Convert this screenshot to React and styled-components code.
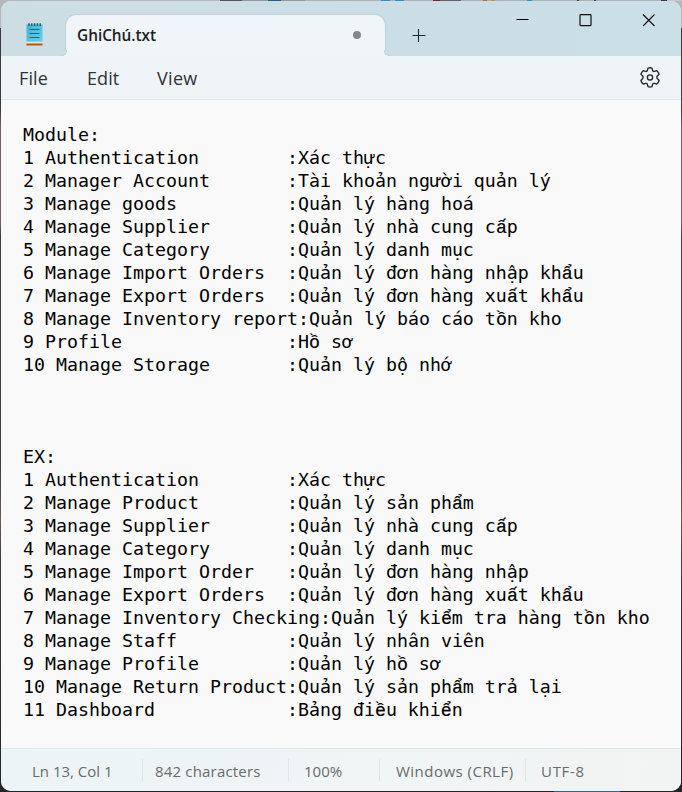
import React from "react";
import styled, { createGlobalStyle } from "styled-components";

const GlobalStyle = createGlobalStyle`
  * { box-sizing: border-box; }
  html, body { margin: 0; padding: 0; overflow: hidden; }
`;

const Desktop = styled.div`
  width: 682px;
  height: 792px;
  padding: 1px;
  overflow: hidden;
  background:
    linear-gradient(90deg, #55565a 0 22px, #96999c 22px 48px, #235f83 48px 61px, #96999c 61px 85px, #aeb1b6 85px 161px, #2a8fc9 161px 170px, #aeb1b6 170px 175px, #2a8fc9 175px 184px, #aeb1b6 184px 213px, #8c1c20 213px 220px, #606166 220px 241px, #aeb1b6 241px 263px, #dc5e3c 263px 267px, #aeb1b6 267px 271px, #d58a3c 271px 275px, #aeb1b6 275px 307px, #1c9bc9 307px 312px, #aeb1b6 312px 357px, #3c3d42 357px 359px, #aeb1b6 359px 374px, #3c3d42 374px 376px, #aeb1b6 376px 441px, #3c3d42 441px 447px, #c5c7ca 447px) 220px 0 / 462px 1px no-repeat,
    linear-gradient(#b4b7ba, #b4b7ba) 0 0 / 682px 28px no-repeat,
    linear-gradient(90deg, #2f659b, #2f659b) 554px 791px / 66px 1px no-repeat,
    linear-gradient(#3b3b3d 0 110px, #705d66 125px 225px, #3d3d41 235px 460px, #6b5a58 520px, #3b3b40 560px, #242427);
`;

const Window = styled.main`
  display: flex;
  flex-direction: column;
  width: 680px;
  height: 790px;
  overflow: hidden;
  border-radius: 10px;
  background: #f9f9f9;
  font-family: "Open Sans", "Noto Sans", sans-serif;
`;

const TitleBar = styled.header`
  display: flex;
  height: 55px;
  flex: none;
  padding-top: 13px;
  background: linear-gradient(90deg, #cddde4, #cbdfe6);
`;

const AppIcon = styled.div`
  width: 64px;
  padding: 9px 0 0 25px;
  svg { display: block; }
`;

const Tab = styled.div`
  position: relative;
  display: flex;
  align-items: flex-start;
  justify-content: space-between;
  width: 321px;
  height: 42px;
  padding: 9px 24px 0 11px;
  border: 1px solid #bfd2d8;
  border-bottom: 0;
  border-radius: 11px 11px 0 0;
  background: #eff5f8;
  &::before, &::after {
    content: "";
    position: absolute;
    bottom: 0;
    width: 5px;
    height: 5px;
    border-bottom: 1px solid #bfd2d8;
    background: #ccdee5;
  }
  &::before {
    left: -5px;
    border-right: 1px solid #bfd2d8;
    border-bottom-right-radius: 5px;
    box-shadow: 2px 2px 0 1px #eff5f8;
    clip-path: inset(0 -1px 0 0);
  }
  &::after {
    right: -5px;
    border-left: 1px solid #bfd2d8;
    border-bottom-left-radius: 5px;
    box-shadow: -2px 2px 0 1px #eff5f8;
    clip-path: inset(0 0 0 -1px);
  }
`;

const TabName = styled.span`
  font-size: 15.4px;
  font-weight: 600;
  line-height: 24px;
  letter-spacing: -0.03px;
  color: #1c2022;
`;

const UnsavedDot = styled.span`
  width: 8px;
  height: 8px;
  margin-top: 7px;
  border-radius: 50%;
  background: #85888a;
`;

const NewTab = styled.div`
  display: flex;
  width: 60px;
  padding: 14px 0 0 26px;
  margin-right: 43px;
  svg { flex: none; }
`;

const Caption = styled.div`
  display: flex;
  gap: 50px;
  margin-left: 26.5px;
  svg { display: block; flex: none; }
`;

const MenuBar = styled.nav`
  display: flex;
  align-items: flex-start;
  flex: none;
  height: 44px;
  padding: 9px 21px 0 18px;
  background: #eff4f8;
  border-bottom: 1px solid #dbe5ea;
`;

const MenuItem = styled.span`
  width: ${(p) => p.$width}px;
  color: #303335;
  font-size: 18px;
  line-height: 27px;
  letter-spacing: ${(p) => p.$tracking || 0}px;
  white-space: nowrap;
`;

const Settings = styled.div`
  margin: 2px 0 0 auto;
  svg { display: block; }
`;

const Editor = styled.div`
  flex: 1;
  padding: 23px 0 0 22px;
  color: #000;
  font-family: "DejaVu Sans Mono", "Liberation Mono", monospace;
  font-size: 18.27px;
  line-height: 23px;
`;

const Line = styled.div`
  height: 23px;
  white-space: pre;
`;

/* Vowels with two stacked marks, kept inside their own cell. */
const StackedVowel = styled.span`
  font-family: "Liberation Mono", monospace;
  line-height: 0;
  -webkit-text-stroke: 0.2px #000;
`;

const StatusBar = styled.footer`
  display: flex;
  align-items: flex-start;
  flex: none;
  height: 43px;
  padding-top: 10px;
  border-top: 1px solid #dfe6e8;
  background: linear-gradient(100deg, #ecf4f7, #f0f5f5 60%, #f3f3f3);
`;

const StatusItem = styled.span`
  width: ${(p) => p.$width}px;
  height: 22px;
  padding-left: ${(p) => p.$inset}px;
  border-right: ${(p) => (p.$last ? "0" : "1px solid #dfe5e7")};
  color: #686b6c;
  font-size: 15px;
  line-height: 25px;
  letter-spacing: ${(p) => p.$tracking || 0}px;
  white-space: nowrap;
`;

const NotepadIcon = () => (
  <svg width="17" height="24" viewBox="0 0 17 24">
    <defs>
      <linearGradient id="paper" x2="1" y2="1">
        <stop stopColor="#43b6d5" />
        <stop offset="1" stopColor="#61cfe8" />
      </linearGradient>
    </defs>
    <path d="M.5 19h16v2H.5z" fill="#dfe5e8" />
    <path d="M.5 20.5h16v2H.5z" fill="#b65a0a" />
    <path d="M.5 1.5h16v17H.5z" fill="url(#paper)" />
    <path d="M3.5 6.5h10M3.5 10.5h10M3.5 14.5h10" stroke="#126b8b" strokeWidth="1.1" />
    <path d="M3 .3v2.7M5.8 .3v2.7M8.6 .3v2.7M11.4 .3v2.7M14.2 .3v2.7" stroke="#19536d" strokeWidth="1.4" />
  </svg>
);

const GearIcon = () => (
  <svg width="20" height="21" viewBox="0 0 20 21" fill="none" stroke="#25292b" strokeWidth="1.35" strokeLinejoin="round">
    <path d="M8 1.1Q10 .5 12 1.1L12.6 3.6Q13 4.7 14.3 4.4L16.8 3.7Q18.5 5.2 19.1 7.2L17.3 9Q16.4 10.2 17.3 11.5L19.1 13.5Q18.5 15.6 16.8 17L14.3 16.4Q13 16.1 12.6 17.3L12 19.7Q10 20.3 8 19.7L7.4 17.3Q7 16.1 5.7 16.4L3.2 17Q1.5 15.6.9 13.5L2.7 11.5Q3.6 10.2 2.7 9L.9 7.2Q1.5 5.2 3.2 3.7L5.7 4.4Q7 4.7 7.4 3.6Z" />
    <circle cx="10" cy="10.4" r="2.6" />
  </svg>
);

const sections = [
  ["Module:", [
    ["1 Authentication", "Xác thực"],
    ["2 Manager Account", "Tài khoản người quản lý"],
    ["3 Manage goods", "Quản lý hàng hoá"],
    ["4 Manage Supplier", "Quản lý nhà cung cấp"],
    ["5 Manage Category", "Quản lý danh mục"],
    ["6 Manage Import Orders", "Quản lý đơn hàng nhập khẩu"],
    ["7 Manage Export Orders", "Quản lý đơn hàng xuất khẩu"],
    ["8 Manage Inventory report", "Quản lý báo cáo tồn kho"],
    ["9 Profile", "Hồ sơ"],
    ["10 Manage Storage", "Quản lý bộ nhớ"],
  ]],
  ["EX:", [
    ["1 Authentication", "Xác thực"],
    ["2 Manage Product", "Quản lý sản phẩm"],
    ["3 Manage Supplier", "Quản lý nhà cung cấp"],
    ["4 Manage Category", "Quản lý danh mục"],
    ["5 Manage Import Order", "Quản lý đơn hàng nhập"],
    ["6 Manage Export Orders", "Quản lý đơn hàng xuất khẩu"],
    ["7 Manage Inventory Checking", "Quản lý kiểm tra hàng tồn kho"],
    ["8 Manage Staff", "Quản lý nhân viên"],
    ["9 Manage Profile", "Quản lý hồ sơ"],
    ["10 Manage Return Product", "Quản lý sản phẩm trả lại"],
    ["11 Dashboard", "Bảng điều khiển"],
  ]],
];

const lines = sections
  .map(([title, rows]) => [title, ...rows.map(([name, label]) => `${name.padEnd(24)}:${label}`)].join("\n"))
  .join("\n\n\n\n")
  .split("\n");

const NoteLine = ({ text }) => (
  <Line>
    {text.split(/([ấẩồểề])/).map((part, i) => (i % 2 ? <StackedVowel key={i}>{part}</StackedVowel> : part))}
  </Line>
);

export default function App() {
  return (
    <>
      <GlobalStyle />
      <Desktop>
        <Window>
          <TitleBar>
            <AppIcon><NotepadIcon /></AppIcon>
            <Tab><TabName>GhiChú.txt</TabName><UnsavedDot /></Tab>
            <NewTab>
              <svg width="14" height="14" stroke="#202829" strokeWidth="1.1"><path d="M.5 7.5h13M6.5 1v13" /></svg>
            </NewTab>
            <Caption>
              <svg width="13" height="13" stroke="#000" strokeWidth="1"><path d="M.5 5.5h12" /></svg>
              <svg width="13" height="13" fill="none" stroke="#111" strokeWidth="1.2"><rect x="1" y=".6" width="11" height="11" rx=".8" /></svg>
              <svg width="13" height="13" stroke="#111" strokeWidth="1.1"><path d="M1 .5l11.5 11.5M12.5 .5l-11.5 11.5" /></svg>
            </Caption>
          </TitleBar>
          <MenuBar>
            <MenuItem $width={68} $tracking={0.1}>File</MenuItem>
            <MenuItem $width={70} $tracking={0.1}>Edit</MenuItem>
            <MenuItem $width={60} $tracking={0.3}>View</MenuItem>
            <Settings><GearIcon /></Settings>
          </MenuBar>
          <Editor>
            {lines.map((text, i) => <NoteLine key={i} text={text} />)}
          </Editor>
          <StatusBar>
            <StatusItem $width={142} $inset={31}>Ln 13, Col 1</StatusItem>
            <StatusItem $width={146} $inset={12} $tracking={0.18}>842 characters</StatusItem>
            <StatusItem $width={91} $inset={15}>100%</StatusItem>
            <StatusItem $width={146} $inset={16} $tracking={0.48}>Windows (CRLF)</StatusItem>
            <StatusItem $width={100} $inset={15} $tracking={0.7} $last>UTF-8</StatusItem>
          </StatusBar>
        </Window>
      </Desktop>
    </>
  );
}
